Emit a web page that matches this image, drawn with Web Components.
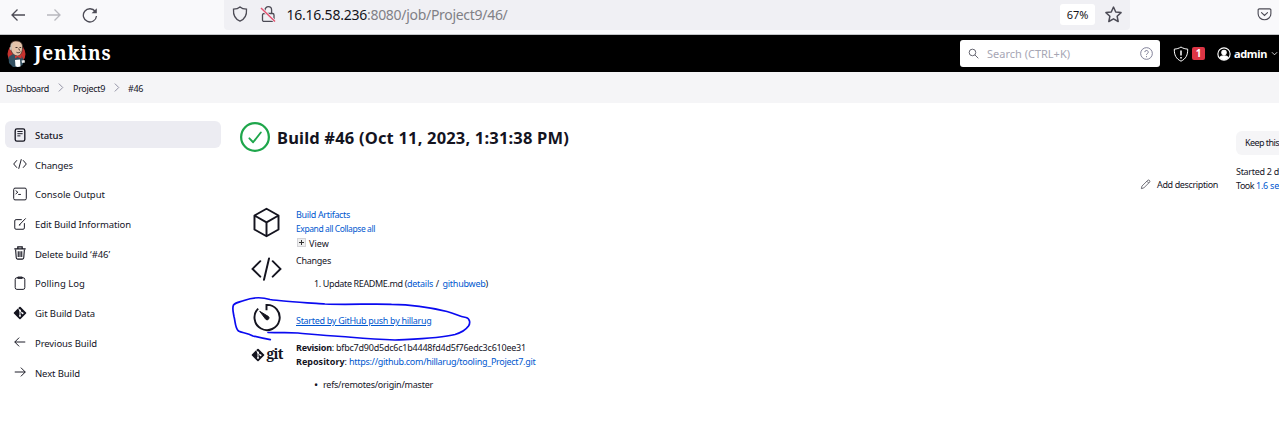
<!DOCTYPE html>
<html lang="en">
<head>
<meta charset="utf-8">
<title>Project9 #46 [Jenkins]</title>
<style>
html,body{margin:0;background:#fff}
body{width:1279px;height:437px;overflow:hidden;font-family:"Noto Sans","Open Sans",sans-serif;color:#14141f}
</style>
</head>
<body>
<build-page></build-page>
<script>
const ICONS = {
  back: '<path d="M15 8H2M7.500 2.500L2 8l5.500 5.500"/>',
  forward: '<path d="M1 8h13M8.500 2.500L14 8l-5.500 5.500"/>',
  reload: '<path d="M13.300 4.500A6.600 6.600 0 1 0 14.500 9"/><path d="M14.800 1.200v5H9.600z" fill="currentColor" stroke="none"/>',
  shield: '<path d="M8 .9C6.500 2.200 4 3 1.500 3.200c-.4 5.300 1.500 9.800 6.500 11.900 5-2.100 6.900-6.600 6.500-11.900C12 3 9.500 2.200 8 .9z"/>',
  lock: '<rect x="2.500" y="7.500" width="11.500" height="8" rx="1.500"/><path d="M5 7.500V4a3.300 3.300 0 0 1 6.600 0v3.500"/><path d="M1 2l14 13.500" stroke="#f0f0f4" stroke-width="3"/><path d="M1 2l14 13.500" stroke="#e2506f" stroke-width="1.400"/>',
  star: '<path d="M8 1l2.100 4.600 5 .6-3.700 3.400 1 5L8 12.100l-4.400 2.500 1-5L.9 6.200l5-.6z" stroke-linejoin="round"/>',
  pocket: '<path d="M2.500 2h11a1.300 1.300 0 0 1 1.300 1.300v4a6.800 6.300 0 0 1-13.600 0v-4A1.300 1.300 0 0 1 2.500 2z"/><path d="M4.800 6L8 9l3.200-3" stroke-linecap="round"/>',
  search: '<circle cx="6.500" cy="6.500" r="4.800"/><path d="M10 10l5 5"/>',
  help: '<circle cx="8" cy="8" r="7.200"/><path d="M5.900 6.300a2.100 2.100 0 1 1 3.100 1.900c-.7.400-1 .7-1 1.500M8 11.200v1.300"/>',
  warn: '<path d="M8 1C6 2.300 3.800 3 1.300 3.100 1.200 9 3 12.800 8 15.200c5-2.400 6.800-6.200 6.700-12.100C12.200 3 10 2.300 8 1z" stroke-width="1"/><path d="M8 4.500v5M8 11v1.500" stroke-width="1.500"/>',
  user: '<circle cx="8" cy="8" r="7"/><circle cx="8" cy="6.200" r="2.500" fill="currentColor"/><path d="M3.500 12.300c1-3.100 8-3.100 9 0C10.500 15 5.500 15 3.500 12.300z" fill="currentColor"/>',
  down: '<path d="M2 5l6 6 6-6"/>',
  chevron: '<path d="M5 1l7 7-7 7"/>',
  status: '<rect x="2.500" y="1" width="11" height="14" rx="2" stroke-width="1.500"/><path d="M5 4h6M5 6.500h6M5 9h3.500"/>',
  code: '<path d="M4.500 3.700L.8 8l3.700 4.300M11.500 3.700L15.200 8l-3.700 4.300M9.500 2.500l-3 11"/>',
  console: '<rect x=".8" y="1.300" width="14.400" height="13.400" rx="1.500"/><path d="M3 4l2.500 2L3 8M6 8.500h3"/>',
  edit: '<path d="M10 3H3.500A1.500 1.500 0 0 0 2 4.500v8A1.500 1.500 0 0 0 3.500 14h8a1.500 1.500 0 0 0 1.500-1.500V7M7 9.300L14.500 1.600M7 9.300l1.500-.3"/>',
  trash: '<path d="M1.500 3.200h13M5.500 3V1h5v2" stroke-width="1.400"/><path d="M3 4l.7 9.500c.1.900.6 1.500 1.500 1.500h5.600c.9 0 1.400-.6 1.500-1.500L13 4M6 6v6.500M8 6v6.500M10 6v6.500" stroke-width="1.250"/>',
  clipboard: '<rect x="2.500" y="2" width="11" height="13.300" rx="2"/><path d="M5.500 1.200h5v1.500h-5z"/>',
  git: '<rect x="2.600" y="2.600" width="10.800" height="10.800" rx="1" transform="rotate(45 8 8)" fill="currentColor" stroke="none"/><path d="M6 2.700l2 2.500v6M8 5.500l3 3" stroke="#fff" stroke-width="1.100"/><circle cx="8" cy="11.300" r="1.100" fill="#fff" stroke="none"/><circle cx="10.900" cy="8.300" r="1.100" fill="#fff" stroke="none"/><circle cx="8" cy="5.200" r="1.100" fill="#fff" stroke="none"/>',
  prev: '<path d="M14 8H2M7 3L2 8l5 5"/>',
  next: '<path d="M2 8h12M9 3l5 5-5 5"/>',
  pencil: '<path d="M2 14l.8-3.600L11.500 1.700c1.600-1 3.600 1 2.700 2.600L5.500 13z M10 3.200l2.700 2.700"/>',
  ok: '<circle cx="8" cy="8" r="7.400" stroke-width="1.200"/><path d="M5 8.700l2 2.100 4.100-5.200" stroke-linecap="round" stroke-linejoin="round" stroke-width="1"/>',
  cube: '<path d="M8 .9l6.200 3.500v7.200L8 15.100l-6.200-3.500V4.400zM1.800 4.400L8 7.900l6.200-3.500M8 7.900v7.200" stroke-linejoin="round"/>',
  bigcode: '<path d="M4.800 3.700L.8 7.700l4 4M11.200 3.700l4 4-4 4M9.300 2.300L6.700 13.300" stroke-linecap="round"/>',
  timer: '<path d="M8 4.300V1.500A6.500 6.500 0 1 1 3.700 3.400"/><path d="M4.500 4.800l4.500 2.700a.9.900 0 0 1-1.400 1.400z" fill="currentColor" stroke-width=".5"/>'
};
const define = (name, html, ready) => customElements.define(name, class extends HTMLElement {
  connectedCallback() {
    if (this.shadowRoot) return;
    const root = this.attachShadow({mode: 'open'});
    root.innerHTML = typeof html === 'function' ? html(this) : html;
    if (ready) ready(this, root);
  }
});

define('ui-icon', el => {
  const s = el.getAttribute('size') || 15;
  return `<style>:host{display:block;flex:none;width:${s}px;height:${s}px}svg{display:block}</style>
  <svg width="${s}" height="${s}" viewBox="0 0 16 16" fill="none" stroke="currentColor" stroke-width="${el.getAttribute('weight') || 1.1}">${ICONS[el.getAttribute('name')]}</svg>`;
});

/* One line of text, tracked so that it fills the width given in "w". */
define('ui-text', `<style>:host{display:inline-block;flex:none;white-space:pre}span{display:inline-block}:host([underline]) span{text-decoration:underline}</style><span><slot></slot></span>`, (el, root) => {
  const w = +el.getAttribute('w');
  if (!w) return;
  const span = root.querySelector('span');
  const n = [...el.textContent].length;
  span.style.letterSpacing = ((w - span.getBoundingClientRect().width) / n).toFixed(3) + 'px';
  el.style.width = w + 'px';
});

define('browser-bar', `<style>
:host{display:flex;background:#f9f9fb;border-bottom:1px solid #c3c5c8;color:#4c4b55;box-sizing:border-box;height:35px}
.nav{display:flex;width:224px;gap:20px;padding:7px 0 0 10px;box-sizing:border-box}
.url{display:flex;width:906px;height:30px;background:#f0f0f4;border-radius:0 0 4px 4px;box-sizing:border-box;padding-left:8px;align-items:center}
.url ui-icon{margin-top:-2px}
.addr{margin-left:10.500px;font-size:14px;color:#15141a;line-height:20px;display:flex}
.addr .dim{color:#808086}
.zoom{margin-left:auto;width:35px;height:21px;border-radius:3px;background:#fff;font-size:11px;line-height:21px;text-align:center;color:#15141a;margin-top:-1px}
.url .star{margin:-2px 8px 0 10px}
.pocket{margin:7px 7px 0 auto}
.dis{color:#b8b8be}
</style>
<div class="nav"><ui-icon name="back" size="16" weight="1.300"></ui-icon><ui-icon class="dis" name="forward" size="16" weight="1.300"></ui-icon><ui-icon name="reload" size="16" weight="1.300"></ui-icon></div>
<div class="url"><ui-icon name="shield" size="16" weight="1.300"></ui-icon><ui-icon style="margin-left:12px" name="lock" size="16" weight="1.300"></ui-icon>
<div class="addr"><ui-text w="80.500">16.16.58.236</ui-text><ui-text class="dim" w="140.500">:8080/job/Project9/46/</ui-text></div>
<div class="zoom"><ui-text w="21.500">67%</ui-text></div><ui-icon class="star" name="star" size="17" weight="1.400"></ui-icon></div>
<ui-icon class="pocket" name="pocket" size="15" weight="1.200"></ui-icon>`);

define('jenkins-logo', `<style>:host{display:flex;color:#fff}svg{display:block}
ui-text{font:bold 19px/24px "Noto Serif",serif;margin:1px 0 0 8px}</style>
<svg width="20" height="28" viewBox="0 0 20 28"><ellipse cx="10.500" cy="14" rx="9" ry="9.500" fill="#c8322e"/>
<path d="M4.500 7C4 2.500 7 .8 11 1c4 .3 6 3 5.500 7-.2 4-1.500 7.500-5 8C7 15.500 5 12 4.500 7z" fill="#e3c3aa" stroke="#43312a" stroke-width=".8"/>
<path d="M4.500 7C3 7 3.500 10 5.500 10.500L6 6l1-3C5.500 3 4.700 5 4.500 7z" fill="#c8c2b8"/>
<path d="M9.500 7.500h2M13.500 7.500h1.700M10.500 12.300c1.500.8 3 .5 4-.5M12.700 8.500l.9 2" stroke="#30241f" stroke-width=".9" fill="none"/>
<path d="M2.500 17l4.500-3 4.500 3 4-1.500 2.500 5-1.500 4.500-4 2H7L3 23z" fill="#335061"/>
<path d="M11.500 16.500L15.500 14.500v4l-4-1.500-2.500 1.500v-3z" fill="#d33833"/><path d="M9 20l5-.5.500 7-3 .5-2-.8z" fill="#fff"/><path d="M15.500 20.500l3-.5.500 2.500-3 .5z" fill="#eee"/></svg>
<ui-text w="77.500">Jenkins</ui-text>`);

define('jenkins-header', `<style>
:host{display:flex;height:37px;background:#000;color:#fff;box-sizing:border-box;padding:5px 0 0 6px;overflow:hidden}
.search{margin-left:auto;width:200px;height:27px;border-radius:3px;background:#fff;display:flex;align-items:center;box-sizing:border-box;padding:0 7px 0 8px;color:#555561}
.search ui-text{font-size:11px;color:#a6a6b4;margin-left:8px}
.help{margin-left:auto;color:#73738c}
.r{display:flex;height:27px;align-items:center;width:119px;padding-left:13px;box-sizing:border-box;font-weight:bold;font-size:11px;flex:none}
.badge{width:13px;height:13px;line-height:13px;background:#dc3545;border-radius:2px;text-align:center;margin:0 12px 0 3px;font-size:10px}
</style><jenkins-logo></jenkins-logo>
<div class="search"><ui-icon name="search" size="11" weight="1.300"></ui-icon><ui-text w="83">Search (CTRL+K)</ui-text><ui-icon class="help" name="help" size="13"></ui-icon></div>
<div class="r"><ui-icon name="warn" size="16"></ui-icon><div class="badge">1</div><ui-icon name="user" size="14" weight="1.300"></ui-icon><ui-text style="margin:-1px 0 0 3px" w="33">admin</ui-text><ui-icon name="down" size="7" weight="1.800" style="margin:-1px 0 0 4px"></ui-icon></div>`);

define('crumb-bar', `<style>:host{display:flex;height:31px;box-sizing:border-box;padding:2px 0 0 6px;background:#f5f5f7;align-items:center;font-size:9px;line-height:14px}
ui-icon{color:#8d8da0;margin:-3px 8px 0 7px}</style>
<ui-text w="43">Dashboard</ui-text><ui-icon name="chevron" size="9" weight="1.700"></ui-icon><ui-text w="32">Project9</ui-text><ui-icon name="chevron" size="9" weight="1.700" style="margin:-3px 7px 0 7px"></ui-icon><ui-text w="15">#46</ui-text>`);

define('side-item', el => `<style>:host{display:flex;height:27px;align-items:center;box-sizing:border-box;padding-left:8px;border-radius:6px;font-size:9.500px;line-height:14px}
:host([active]){background:#ececf2;font-weight:500}
ui-text{margin:3px 0 0 8px;}</style><ui-icon name="${el.getAttribute('icon')}" size="14"></ui-icon><ui-text w="${el.getAttribute('w')}">${el.textContent}</ui-text>`);

define('side-panel', `<style>:host{display:flex;flex-direction:column;gap:2.700px;width:216px;flex:none;padding:18px 0 0 5px}</style>
<side-item active icon="status" w="28">Status</side-item><side-item icon="code" w="38">Changes</side-item><side-item icon="console" w="70">Console Output</side-item>
<side-item icon="edit" w="96">Edit Build Information</side-item><side-item icon="trash" w="75">Delete build ‘#46’</side-item><side-item icon="clipboard" w="50">Polling Log</side-item>
<side-item icon="git" w="60">Git Build Data</side-item><side-item icon="prev" w="62">Previous Build</side-item><side-item icon="next" w="45">Next Build</side-item>`);

define('summary-row', `<style>:host{display:flex}.i{width:53px;display:flex;justify-content:center;flex:none;margin-right:3px}.t{line-height:14px}</style>
<div class="i"><slot name="icon"></slot></div><div class="t"><slot></slot></div>`);

define('git-logo', `<style>:host{display:flex;align-items:center;height:18px}ui-text{font:bold 14px/18px "Noto Serif",serif;margin:-2px 0 0 2px}</style><ui-icon name="git" size="14"></ui-icon><ui-text w="16">git</ui-text>`);

define('build-main', `<style>
:host{display:block;width:800px;flex:none;padding:19px 0 0 19px;box-sizing:border-box;font-size:9px}
h1{margin:0;display:flex;height:30px;align-items:center;font-size:16.500px;line-height:30px;font-weight:bold}
h1 ui-icon{color:#1ea64b}h1 ui-text{margin:2px 0 0 7px}
.rows{padding-top:56px}
.l{display:flex;height:14px;align-items:center}
.b{color:#0058cf}
.plus{width:9px;height:9px;box-sizing:border-box;border:1px solid #d4d4d8;background:#eee;display:flex;align-items:center;justify-content:center;margin:-3px 3px 0 1px}
.plus svg{display:block}
</style>
<h1><ui-icon name="ok" size="30"></ui-icon><ui-text w="292">Build #46 (Oct 11, 2023, 1:31:38 PM)</ui-text></h1>
<div class="rows">
<summary-row style="height:46px"><ui-icon slot="icon" name="cube" size="31" weight="1" style="margin-top:-1px"></ui-icon>
<div class="l b"><ui-text w="54">Build Artifacts</ui-text></div><div class="l b" style="font-size:8.500px"><ui-text w="79">Expand all Collapse all</ui-text></div>
<div class="l" style="padding-top:1px"><span class="plus"><svg width="7" height="7"><path d="M1 3.500h5M3.500 1v5" stroke="#333"/></svg></span><ui-text w="20">View</ui-text></div></summary-row>
<summary-row style="height:48px"><ui-icon slot="icon" name="bigcode" size="31" weight="1"></ui-icon>
<div class="l"><ui-text w="35">Changes</ui-text></div><div class="l" style="padding:9px 0 0 18px"><ui-text w="93">1. Update README.md (</ui-text><ui-text class="b" w="26">details</ui-text><ui-text w="9.500" style="text-align:center"> / </ui-text><ui-text class="b" w="43">githubweb</ui-text><ui-text w="3">)</ui-text></div></summary-row>
<summary-row style="height:39px"><ui-icon slot="icon" name="timer" size="31" weight="1"></ui-icon><div class="l b" style="padding-top:12px"><ui-text underline w="135.500">Started by GitHub push by hillarug</ui-text></div></summary-row>
<summary-row><git-logo slot="icon" style="margin-top:5px"></git-logo>
<div class="l"><ui-text w="38"><b>Revision</b>:</ui-text><ui-text style="margin-left:2px" w="190">bfbc7d90d5dc6c1b4448fd4d5f76edc3c610ee31</ui-text></div>
<div class="l"><ui-text w="51"><b>Repository</b>:</ui-text><ui-text class="b" style="margin-left:2px" w="186.500">https://github.com/hillarug/tooling_Project7.git</ui-text></div>
<div class="l" style="padding:9px 0 0 18px"><ui-text w="9" style="font-size:11px">•</ui-text><ui-text w="110">refs/remotes/origin/master</ui-text></div></summary-row>
</div>`);

define('build-aside', `<style>:host{display:flex;flex:1;min-width:0;overflow:hidden;font-size:9px;line-height:14px;justify-content:flex-start}
.d{display:flex;align-items:center;height:14px;margin:75px 18px 0 119px;flex:none}
.d ui-text{margin-left:6px}.d ui-icon{color:#44444f;margin-top:-1px}
.k{background:#f5f5f7;height:24px;line-height:24px;border-radius:6px 0 0 6px;padding-left:9px;margin:28px 0 10px}
.x{flex:1;min-width:0}.b{color:#0058cf}.s{display:flex}
</style><div class="d"><ui-icon name="pencil" size="11"></ui-icon><ui-text w="61">Add description</ui-text></div>
<div class="x"><div class="k"><ui-text w="34">Keep this</ui-text></div><div class="s"><ui-text w="43">Started 2 d</ui-text></div><div class="s"><ui-text w="20">Took </ui-text><ui-text class="b" w="23">1.6 se</ui-text></div></div>`);

define('ink-note', `<style>:host{position:absolute;left:225px;top:290px;pointer-events:none}svg{display:block}</style>
<svg width="255" height="60" viewBox="225 290 255 60" fill="none" stroke="#0a0af0" stroke-width="1.700" stroke-linecap="round"><path d="M270.300 339.700C263 338.500 261 338 253 336C247 332.500 242 333 238.500 331C235 328 235.500 322 234 316.500C233 311 232 308 233.500 305C236 302 240 302 244 300.500C252 297.500 262 297 270 299.500C282 301.500 310 303 325 304C350 305 370 303.500 391.500 304.300C412 304.500 435 308.500 447 311.500C457 314 458 316.500 466 317.500C470 318.500 470.500 323 468.500 326C465 331 460 333 455 334.500C440 338.500 415 339 395 340C370 339 355 337.500 341.500 336.500C322 335.500 310 334 298 333C286 332 277 333 268 332.500"/></svg>`);

define('build-page', `<style>:host{display:block;width:1279px;height:437px;overflow:hidden;position:relative;background:#fff}.c{display:flex;height:334px}</style>
<browser-bar></browser-bar><jenkins-header></jenkins-header><crumb-bar></crumb-bar><div class="c"><side-panel></side-panel><build-main></build-main><build-aside></build-aside></div><ink-note></ink-note>`);
</script>
</body>
</html>
